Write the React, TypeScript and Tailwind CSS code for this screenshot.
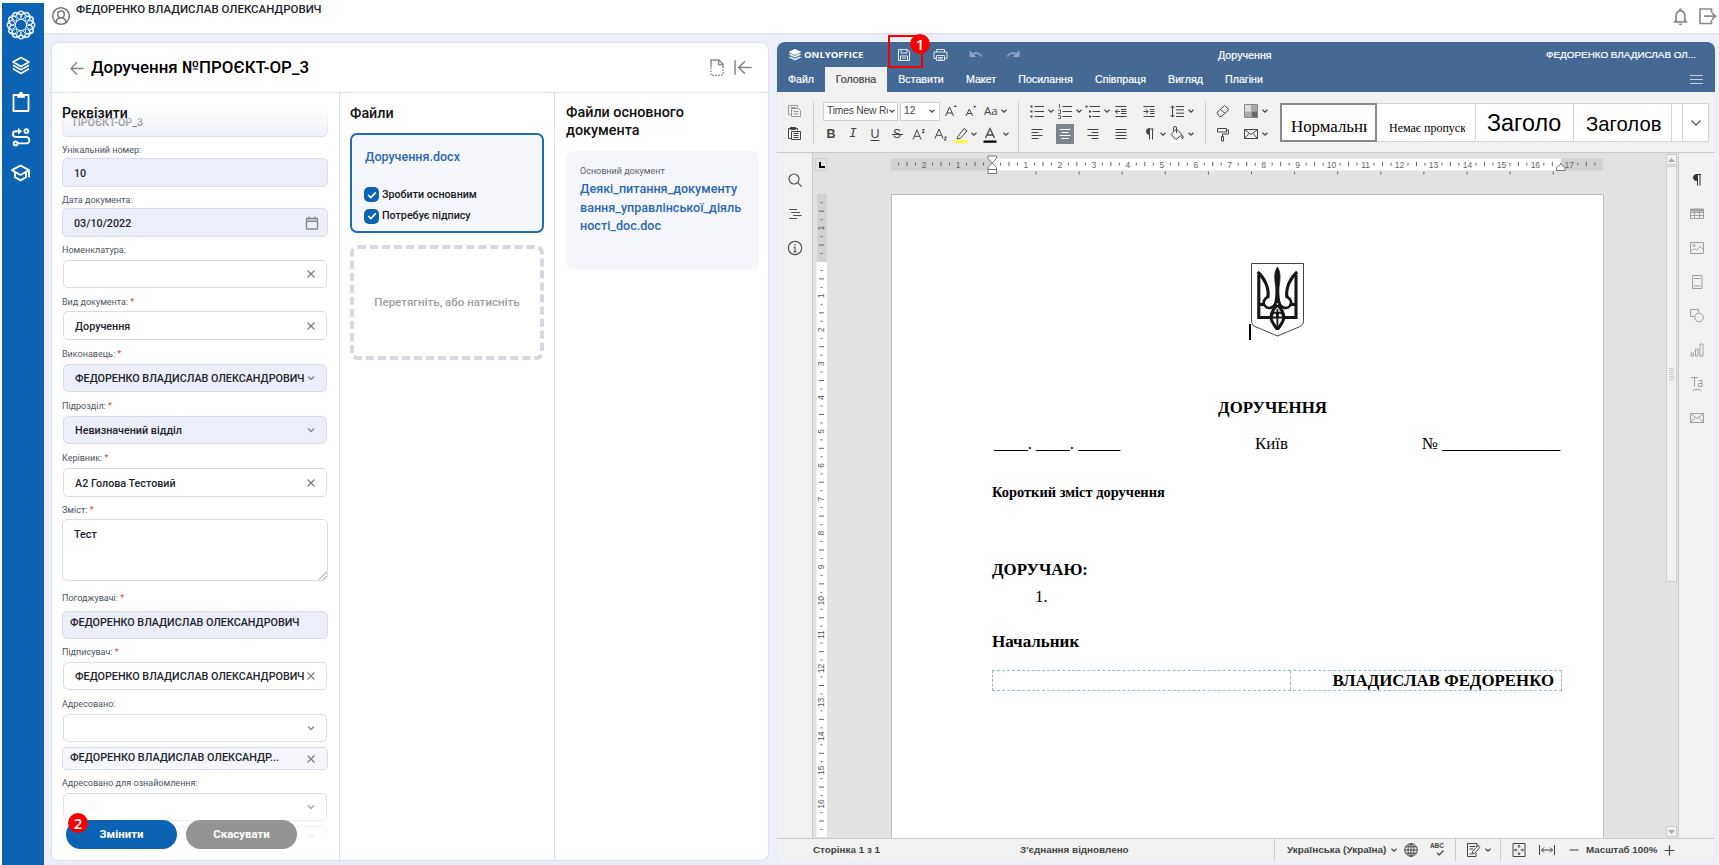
import React, { ReactNode } from "react";
import { MdNotificationsNone } from "react-icons/md";
import { CircleUserRound } from "lucide-react";

/* ---------- shared ---------- */

function Svg({ w, h, className = "", sw = 1, children }: { w: number; h: number; className?: string; sw?: number; children: ReactNode }) {
  return (
    <svg width={w} height={h} viewBox={`0 0 ${w} ${h}`} fill="none" stroke="currentColor" strokeWidth={sw} className={`shrink-0 ${className}`}>
      {children}
    </svg>
  );
}

const Chev = () => (
  <Svg w={8} h={8} sw={1.2} className="text-[#444]">
    <path d="M1.5 2.8 4 5.2 6.5 2.8" />
  </Svg>
);

function Badge({ n, className }: { n: number; className: string }) {
  return (
    <div className={`absolute flex size-[20px] items-center justify-center rounded-full bg-[#f80000] font-['Open_Sans'] text-[15px] font-semibold leading-none text-white ${className}`}>
      {n}
    </div>
  );
}

/* ---------- left navigation ---------- */

function Sidebar() {
  return (
    <nav className="ml-[2px] mt-[3px] flex w-[42px] shrink-0 flex-col items-center bg-[#0c62b3] pr-[4px] text-white">
      <Svg w={30} h={30} sw={0.9} className="mt-[7px]">
        {[0, 30, 60, 90, 120, 150, 180, 210, 240, 270, 300, 330].map((a) => (
          <g key={a} transform={`rotate(${a} 15 15)`}>
            <circle cx="15" cy="5.3" r="4.3" />
            <path d="M9.500 6 15 1l5.500 5" />
          </g>
        ))}
      </Svg>
      <Svg w={20} h={20} sw={1.6} className="mt-[16px]">
        <path d="M10 1.500 18 6l-8 4.500L2 6z M2 9.200l8 4.600 8-4.600 M2 12.800l8 4.700 8-4.700" strokeLinejoin="round" />
      </Svg>
      <Svg w={20} h={22} sw={1.8} className="mt-[15px]">
        <path d="M2.500 4h15v16h-15z" strokeLinejoin="round" />
        <path d="M6.200 3.200h7.600v3.600H6.200z" fill="currentColor" stroke="none" />
        <circle cx="10" cy="2.800" r="2" fill="currentColor" stroke="none" />
      </Svg>
      <Svg w={20} h={20} sw={1.9} className="mt-[14px]">
        <path d="M8 4.200H4.800a2.900 2.900 0 0 0 0 5.800h10.400a3.200 3.200 0 0 1 0 6.400H7" />
        <path d="M7 .8 11 4.200 7 7.600z" fill="currentColor" stroke="none" />
        <circle cx="15.400" cy="4" r="1.900" />
        <circle cx="4.600" cy="16.400" r="1.900" />
      </Svg>
      <Svg w={22} h={20} sw={1.9} className="mt-[16px]">
        <path d="M10.500 2.500 19 7.200l-8.500 4.800L2 7.200z M5 9.200v5l5.500 3.100 5.500-3.100v-5 M19 7.200v7" strokeLinejoin="round" />
      </Svg>
    </nav>
  );
}

/* ---------- form ---------- */

function Label({ text, req, className }: { text: string; req?: boolean; className: string }) {
  return (
    <div className={`shrink-0 text-[9px] leading-[12px] text-[#4c5560] ${className}`}>
      {text}
      {req && <span className="text-[#e0483e]"> *</span>}
    </div>
  );
}

const Cross = () => (
  <Svg w={10} h={10} sw={1.1} className="text-[#777]">
    <path d="m1.500 1.500 7 7m0-7-7 7" />
  </Svg>
);

function Field({ value, icon, disabled, className = "" }: { value?: string; icon?: "x" | "v" | "cal"; disabled?: boolean; className?: string }) {
  return (
    <div className={`flex shrink-0 items-center rounded-[5px] border border-[#d9dbe6] text-[10.76px] font-medium text-[#20242b] ${disabled ? "bg-[#eceef9]" : "bg-white"} ${className}`}>
      <span className="flex-1 whitespace-nowrap pt-[2px] leading-[16px]">{value}</span>
      {icon === "x" && <Cross />}
      {icon === "v" && (
        <Svg w={10} h={10} sw={1.3} className="text-[#888]">
          <path d="m2 3.500 3 3 3-3" />
        </Svg>
      )}
      {icon === "cal" && (
        <Svg w={14} h={14} sw={1.3} className="text-[#888]">
          <path d="M1.500 2.500h11v10.500h-11z M1.500 5.300h11 M4 .5v2 M10 .5v2" />
          <path d="M1.500 2.500h11v2.400h-11z" fill="currentColor" fillOpacity=".25" stroke="none" />
        </Svg>
      )}
    </div>
  );
}

function Requisites() {
  const sel = "mx-px pl-[11px] pr-[10px]";
  return (
    <section className="relative flex w-[288px] shrink-0 flex-col overflow-hidden border-r border-[#dfe1ec] pl-[10px] pr-[11px]">
      <Field value="ПРОЄКТ-ОР_3" disabled className="mt-[14px] h-[30px] pl-[10px]" />
      <Label text="Унікальний номер:" className="h-[21px] pt-[7px]" />
      <Field value="10" disabled className="h-[29px] pl-[11px]" />
      <Label text="Дата документа:" className="h-[21px] pt-[7px]" />
      <Field value="03/10/2022" disabled icon="cal" className="h-[29px] pl-[11px] pr-[8px]" />
      <Label text="Номенклатура:" className="h-[23px] pt-[7px]" />
      <Field icon="x" className={`h-[28px] ${sel}`} />
      <Label text="Вид документа:" req className="h-[23px] pt-[8px]" />
      <Field value="Доручення" icon="x" className={`h-[29px] ${sel}`} />
      <Label text="Виконавець:" req className="h-[24px] pt-[8px]" />
      <Field value="ФЕДОРЕНКО ВЛАДИСЛАВ ОЛЕКСАНДРОВИЧ" icon="v" disabled className={`h-[28px] ${sel}`} />
      <Label text="Підрозділ:" req className="h-[24px] pt-[8px]" />
      <Field value="Невизначений відділ" icon="v" disabled className={`h-[28px] ${sel}`} />
      <Label text="Керівник:" req className="h-[24px] pt-[8px]" />
      <Field value="А2 Голова Тестовий" icon="x" className={`h-[29px] ${sel}`} />
      <Label text="Зміст:" req className="h-[22px] pt-[7px]" />
      <div className="relative h-[62px] shrink-0 rounded-[5px] border border-[#d9dbe6] pl-[11px] pt-[8px] text-[10.76px] font-medium leading-[14px] text-[#20242b]">
        Тест
        <Svg w={9} h={9} className="absolute bottom-0 right-0 text-[#888]">
          <path d="M1 8.500 8.500 1 M5 8.500 8.500 5" />
        </Svg>
      </div>
      <Label text="Погоджувачі:" req className="h-[30px] pt-[11px]" />
      <Field value="ФЕДОРЕНКО ВЛАДИСЛАВ ОЛЕКСАНДРОВИЧ" disabled className="h-[28px] pb-[6px] pl-[7px]" />
      <Label text="Підписувач:" req className="h-[23px] pt-[7px]" />
      <Field value="ФЕДОРЕНКО ВЛАДИСЛАВ ОЛЕКСАНДРОВИЧ" icon="x" className={`h-[28px] ${sel}`} />
      <Label text="Адресовано:" className="h-[24px] pt-[8px]" />
      <Field icon="v" className={`h-[28px] ${sel}`} />
      <div className="mt-[5px] flex h-[23px] shrink-0 items-center justify-between rounded-[5px] border border-[#d9dbe6] bg-[#f6f7fd] pl-[7px] pr-[11px] text-[10.84px] font-medium text-[#20242b]">
        ФЕДОРЕНКО ВЛАДИСЛАВ ОЛЕКСАНДР...
        <Cross />
      </div>
      <Label text="Адресовано для ознайомлення:" className="h-[23px] pt-[7px]" />
      <Field icon="v" className={`h-[28px] ${sel}`} />
      <Field icon="v" className={`mt-[5px] h-[20px] ${sel}`} />

      <div className="absolute inset-x-0 top-0 h-[44px] bg-gradient-to-b from-white from-35% to-white/10" />
      <h2 className="absolute left-[10px] top-[11px] text-[14px] font-medium leading-[18px] text-[#111]">Реквізити</h2>
      <div className="absolute inset-x-0 bottom-0 h-[64px] bg-gradient-to-b from-white/0 to-white to-75%" />
      <div className="absolute bottom-[11px] left-[14px] flex gap-[9px] text-[11.4px] font-bold text-white">
        <button className="h-[29px] w-[111px] rounded-full bg-[#0c62b3]">Змінити</button>
        <button className="h-[29px] w-[111px] rounded-full bg-[#949494]">Скасувати</button>
      </div>
      <Badge n={2} className="bottom-[27px] left-[16px]" />
    </section>
  );
}

function Check({ text }: { text: string }) {
  return (
    <label className="flex h-[21.5px] items-center gap-[3px] text-[10.71px] font-medium text-[#15181d]">
      <span className="-ml-px flex size-[15px] items-center justify-center rounded-[5px] bg-[#0c62b3] text-white">
        <Svg w={10} h={8} sw={1.7}>
          <path d="m1.200 4 2.600 2.500L8.800 1.400" />
        </Svg>
      </span>
      {text}
    </label>
  );
}

function Workspace() {
  return (
    <main className="ml-[7px] mt-[8px] flex h-[819px] w-[718px] shrink-0 flex-col overflow-hidden rounded-[8px] border border-[#dfe1ec] bg-white">
      <div className="flex h-[50px] shrink-0 items-center border-b border-[#dfe1ec] pl-[18px] pr-[16px]">
        <Svg w={14} h={14} sw={1.4} className="text-[#868686]">
          <path d="M13.500 7.500H1 M7 1.200.9 7.500 7 13.600" />
        </Svg>
        <h1 className="ml-[7px] flex-1 whitespace-nowrap text-[16.860px] font-medium text-black">Доручення №ПРОЄКТ-ОР_3</h1>
        <Svg w={14} h={17} sw={1.4} className="text-[#8c8c8c]">
          <path d="M1 8V1h8l4 4v3 M8.500 1v4.500H13" />
          <path d="M1 8.500v7.700h12V8" strokeDasharray="1.6 1.4" />
        </Svg>
        <Svg w={18} h={17} sw={1.5} className="ml-[10px] text-[#868686]">
          <path d="M1 1.300v14.500 M17.600 8.500H4.500 M11 2.200 4.600 8.500l6.400 6.300" />
        </Svg>
      </div>
      <div className="flex min-h-0 flex-1">
        <Requisites />
        <section className="flex w-[215px] shrink-0 flex-col border-r border-[#dfe1ec] px-[10px] pt-[11px]">
          <h2 className="text-[14.3px] font-medium leading-[18px] text-[#111]">Файли</h2>
          <div className="mt-[11px] h-[100px] rounded-[7px] border-2 border-[#1f6cb9] bg-[#f6f7fd] pl-[13px] pt-[13px]">
            <a className="block text-[12.54px] font-medium leading-[18px] text-[#2a68b4]">Доручення.docx</a>
            <div className="mt-[18px]">
              <Check text="Зробити основним" />
              <Check text="Потребує підпису" />
            </div>
          </div>
          <div className="mt-[12px] flex h-[115px] items-center justify-center rounded-[8px] border-4 border-dashed border-[#d6d8e2] text-[11.5px] font-medium text-[#a0a0a0]">
            Перетягніть, або натисніть
          </div>
        </section>
        <section className="flex-1 px-[11px] pt-[11px]">
          <h2 className="text-[14.37px] font-medium leading-[18px] text-[#111]">
            Файли основного
            <br />
            документа
          </h2>
          <div className="mt-[11px] h-[119px] w-[193px] rounded-[7px] bg-[#f6f7fd] pl-[14px] pt-[14px]">
            <p className="text-[9px] leading-[12px] text-[#5a5f66]">Основний документ</p>
            <a className="mt-[3px] block whitespace-nowrap text-[12.58px] font-medium leading-[18.7px] text-[#2a68b4]">
              Деякі_питання_документу
              <br />
              вання_управлінської_діяль
              <br />
              ності_doc.doc
            </a>
          </div>
        </section>
      </div>
    </main>
  );
}

/* ---------- editor chrome ---------- */

const tabs: [string, string][] = [
  ["Файл", "w-[48px]"],
  ["Головна", "w-[62px]"],
  ["Вставити", "w-[68px]"],
  ["Макет", "w-[52px]"],
  ["Посилання", "w-[77px]"],
  ["Співпраця", "w-[73px]"],
  ["Вигляд", "w-[57px]"],
  ["Плагіни", "w-[60px]"],
];

function EditorHeader() {
  return (
    <header className="h-[50px] shrink-0 bg-[#446995] text-white [-webkit-text-stroke:0.2px_currentColor]">
      <div className="flex h-[25px] items-center pt-px">
        <Svg w={14} h={14} className="ml-[11px]" sw={0}>
          <path d="M7 1 13.500 4 7 7 .5 4z" fill="currentColor" />
          <path d="M.5 6.500 2.600 5.600 7 7.700l4.400-2.100 2.100.9L7 9.600z" fill="currentColor" fillOpacity=".9" />
          <path d="M.5 9.400 2.600 8.500 7 10.600l4.400-2.100 2.100.9L7 12.600z" fill="currentColor" fillOpacity=".8" />
        </Svg>
        <span className="ml-[2px] w-[63px] font-['Open_Sans'] text-[9.570px] font-bold [-webkit-text-stroke:0]">ONLYOFFICE</span>
        <Svg w={14} h={14} className="ml-[30px] text-[#dde5ee]">
          <path d="M1.500 1.500h9l2 2v9h-11z M4 1.500v3.500h6V1.500 M3.500 12.500V8h7v4.500 M5 10h4" />
        </Svg>
        <Svg w={15} h={14} className="ml-[22px] text-[#dde5ee]">
          <path d="M3.500 4V1.500h8V4 M3.500 10.500h-2.500V4h13v6.500h-2.500 M3.500 7.500h8v5h-8z M5 9.500h5 M5 11h5" />
        </Svg>
        <Svg w={14} h={10} className="ml-[21px] text-[#8fa5c0]">
          <path d="M1 1v5.500h5.500z" fill="currentColor" />
          <path d="M3 5C6 2 10 2 12.800 6.500" strokeWidth="1.6" />
        </Svg>
        <Svg w={14} h={10} className="ml-[23px] text-[#8fa5c0]">
          <path d="M13 1v5.500H7.500z" fill="currentColor" />
          <path d="M11 5C8 2 4 2 1.200 6.500" strokeWidth="1.6" />
        </Svg>
        <span className="ml-[198px] text-[10.7px]">Доручення</span>
        <span className="ml-auto mr-[19px] text-[9.9px]">ФЕДОРЕНКО ВЛАДИСЛАВ ОЛ...</span>
      </div>
      <div className="flex h-[25px] items-end text-[10.650px]">
        {tabs.map(([t, w], i) => (
          <div key={t} className={`flex h-[25px] items-center justify-center pt-px ${w} ${i === 1 ? "bg-[#f1f1f1] text-[#444]" : ""}`}>
            {t}
          </div>
        ))}
        <Svg w={13} h={10} className="mb-[7px] ml-auto mr-[12px] text-[#c6d2e0]">
          <path d="M0 .5h13 M0 4.500h13 M0 8.500h13" />
        </Svg>
      </div>
    </header>
  );
}

const Ic = ({ children, sw = 1, className = "" }: { children: ReactNode; sw?: number; className?: string }) => (
  <Svg w={18} h={18} sw={sw} className={className}>
    {children}
  </Svg>
);

const listLines = <path d="M6.500 4.500H16 M6.500 9.500H16 M6.500 14.500H16" />;
const mail = (
  <Ic>
    <path d="M2.500 4.500h13v9h-13z M2.500 4.500l6.500 5 6.500-5 M2.500 13.500l4.500-5 M15.500 13.500l-4.500-5" />
  </Ic>
);

function Toolbar() {
  return (
    <div className="flex h-[61px] shrink-0 border-b border-[#cbcbcb] bg-[#f1f1f1] pt-[9px] text-[#444]">
      <div className="ml-[9px] flex h-[43px] w-[28px] flex-col gap-[5px] border-r border-[#cbcbcb] pt-px">
        <Ic className="text-[#999]">
          <path d="M5.500 12.500h-3v-9h9v2 M5.500 6.500h7l2 2v6h-9z M7.500 9.500h5 M7.500 12h5 M4.500 5.500h5" />
        </Ic>
        <Ic>
          <path d="M5.500 13.500h-3v-10h9v2 M5.500 6.500h9v8h-9z M7.500 8.500h5 M7.500 10.500h5 M7.500 12.500h5" />
          <path d="M4.500 2.500h5v2h-5z" fill="currentColor" />
        </Ic>
      </div>
      <div className="flex w-[205px] flex-col gap-[3px] border-r border-[#cbcbcb]">
        <div className="flex h-[20px] items-center pl-[9px]">
          <div className="flex h-[19px] w-[75px] items-center border border-[#cfcfcf] bg-white pl-[3px] text-[10.3px]">
            <span className="w-[61px] overflow-hidden whitespace-nowrap tracking-[-0.2px]">Times New Ro</span>
            <Chev />
          </div>
          <div className="ml-[2px] flex h-[19px] w-[40px] items-center justify-between border border-[#cfcfcf] bg-white px-[3px] text-[10.3px]">
            12
            <Chev />
          </div>
          <Ic className="ml-[2px]">
            <path d="M3.500 14 7.500 5 11.500 14 M5 11h5" />
            <path d="M11.500 5 13.200 3l1.700 2z" fill="currentColor" stroke="none" />
          </Ic>
          <Ic className="ml-[2px]">
            <path d="M4 14 7.300 7 10.600 14 M5.200 11.500h4.200" />
            <path d="M11 4h3.400l-1.700 2z" fill="currentColor" stroke="none" />
          </Ic>
          <span className="ml-[2px] w-[18px] whitespace-nowrap pl-[2px] font-['Open_Sans'] text-[11.5px] leading-none">Aa</span>
          <Chev />
        </div>
        <div className="flex h-[20px] items-center pl-[6px]">
          <span className="w-[22px] text-center text-[12.5px] font-bold">B</span>
          <span className="w-[22px] text-center font-['Liberation_Mono'] text-[13px] italic">I</span>
          <span className="w-[22px] text-center text-[12.5px] underline underline-offset-2">U</span>
          <span className="relative flex w-[22px] items-center justify-center text-[12px]">
            S
            <span className="absolute left-[6px] top-1/2 h-px w-[11px] bg-[#444]" />
          </span>
          <Ic className="mx-[2px]">
            <path d="M3 14.500 7 5 11 14.500 M4.500 11.300h5 M12.300 4.500h2l-2 3h2.200" />
          </Ic>
          <Ic className="mx-[2px]">
            <path d="M3 13.500 7 4 11 13.500 M4.500 10.300h5 M12.300 12h2l-2 3h2.200" />
          </Ic>
          <Ic>
            <path d="M5.500 12 12 3.500l3 2.300-6.700 7.700-3.300.3z" />
            <path d="M2.500 15.500h13v2.300h-13z" fill="#ffff00" stroke="none" />
          </Ic>
          <Chev />
          <Ic className="ml-[3px]">
            <path d="M4.500 13 9 3.500l4.500 9.500 M6 10h6" strokeWidth="1.3" />
            <path d="M2.500 15.500h13v2.300h-13z" fill="#000" stroke="none" />
          </Ic>
          <span className="ml-[3px]">
            <Chev />
          </span>
        </div>
      </div>
      <div className="grid h-[43px] w-[187px] shrink-0 auto-rows-[20px] grid-cols-[18px_8px_18px_8px_18px_8px_18px_8px_18px_8px_18px_8px] items-center gap-x-px gap-y-[3px] border-r border-[#cbcbcb] pl-[9px]">
        <Ic>
          {listLines}
          <path d="M2.500 4.500h2 M2.500 9.500h2 M2.500 14.500h2" strokeWidth="2" />
        </Ic>
        <Chev />
        <Ic>
          {listLines}
          <path d="M3.500 2v4 M2 8h2.500v3 M2 11.500h3 M2 13.500h2.500v3H2" strokeWidth=".8" />
        </Ic>
        <Chev />
        <Ic>
          <path d="M5.500 4.500H16 M8.500 9.500H16 M8.500 14.500H16" />
          <path d="M1.500 4.500h2 M5 9.500h2 M5 14.500h2" strokeWidth="2" />
        </Ic>
        <Chev />
        <Ic>
          <path d="M3.500 4.500h11 M9 7.500h5.500 M9 9.500h5.500 M9 11.500h5.500 M3.500 14.500h11 M8 9.500H3.500 M5.500 7.200 3.300 9.500l2.200 2.300" />
        </Ic>
        <span />
        <Ic>
          <path d="M3.500 4.500h11 M10 7.500h4.500 M10 9.500h4.500 M10 11.500h4.500 M3.500 14.500h11 M3.500 9.500H8 M6 7.200l2.200 2.300L6 11.800" />
        </Ic>
        <span />
        <Ic>
          <path d="M8 4.500h8 M8 7.800h8 M8 11.200h8 M8 14.500h8 M4.500 4v11 M2.500 6l2-2.200L6.500 6 M2.500 13l2 2.200 2-2.200" />
        </Ic>
        <Chev />
        <Ic>
          <path d="M3.500 4.500h11 M3.500 7.500h7 M3.500 10.500h11 M3.500 13.500h7" />
        </Ic>
        <span />
        <span className="flex h-[20px] items-center bg-[#7d858c] text-white">
          <Ic>
            <path d="M3.500 4.500h11 M5.500 7.500h7 M3.500 10.500h11 M5.500 13.500h7" />
          </Ic>
        </span>
        <span />
        <Ic>
          <path d="M3.500 4.500h11 M7.500 7.500h7 M3.500 10.500h11 M7.500 13.500h7" />
        </Ic>
        <span />
        <Ic>
          <path d="M3.500 4.500h11 M3.500 7.500h11 M3.500 10.500h11 M3.500 13.500h11" />
        </Ic>
        <span />
        <Ic>
          <path d="M8.500 4h5 M9.500 4v10.500 M12.500 4v10.500" />
          <path d="M9.500 3.500a3 3 0 0 0 0 6z" fill="currentColor" />
        </Ic>
        <Chev />
        <Ic>
          <path d="M8.500 4 14 9.500 8 14.500 3 9.500z M8.500 8V3a1.500 1.500 0 0 0-3 0v3 M14.500 10.500q1.800 2.500 0 3.500-1.800-1 0-3.500" />
          <path d="M2.500 16h13v2h-13z" fill="#fff" stroke="none" />
        </Ic>
        <Chev />
      </div>
      <div className="grid h-[43px] shrink-0 auto-rows-[20px] grid-cols-[18px_8px_18px_8px] items-center gap-x-px gap-y-[3px] pl-[8px]">
        <Ic>
          <path d="m3 10.500 7.500-7 4.500 4-7.500 7H5.500z M6.500 7.500l4.500 4" />
        </Ic>
        <span />
        <Ic>
          <path d="M3 3h6.500v6.500H3z" fill="#ddd" stroke="none" />
          <path d="M9 3h6.500v6.500H9z" fill="#aaa" stroke="none" />
          <path d="M3 9.500h6.500V16H3z" fill="#aaa" stroke="none" />
          <path d="M9.500 9.500h6V16h-6z" fill="#666" stroke="none" />
          <path d="M2.500 2.500h13v13h-13z" stroke="#888" />
        </Ic>
        <Chev />
        <Ic>
          <path d="M3.500 3.500h9v3.500h-9z M12.500 5h2v4H8.500v2.500 M7.500 11.500h2v4.500h-2z" />
        </Ic>
        <span />
        {mail}
        <Chev />
      </div>
      <div className="ml-[11px] mt-[2px] flex h-[40px] text-black">
        <div className="flex h-[39px] w-[97px] items-end border-2 border-[#8a8a8a] bg-white pb-[2px] pl-[9px]">
          <span className="w-[76px] overflow-hidden whitespace-nowrap font-['Liberation_Serif'] text-[16.840px] leading-[22px]">Нормальни</span>
        </div>
        <div className="flex h-[39px] w-[99px] items-end border-y border-r border-[#d4d4d4] bg-white pb-[4px] pl-[12px]">
          <span className="w-[76px] overflow-hidden whitespace-nowrap font-['Liberation_Serif'] text-[12px] leading-[18px]">Немає пропуск</span>
        </div>
        <div className="flex h-[39px] w-[98px] items-end border-y border-r border-[#d4d4d4] bg-white pb-[5px] pl-[11px]">
          <span className="w-[75px] overflow-hidden whitespace-nowrap text-[23.3px] leading-[26px]">Заголо</span>
        </div>
        <div className="flex h-[39px] w-[98px] items-end border-y border-r border-[#d4d4d4] bg-white pb-[5px] pl-[12px]">
          <span className="w-[75px] overflow-hidden whitespace-nowrap text-[20.3px] leading-[24px]">Заголов</span>
        </div>
        <div className="h-[39px] w-[11px] border-y border-r border-[#d4d4d4] bg-white" />
        <div className="flex h-[39px] w-[26px] items-center justify-center border-y border-r border-[#d4d4d4] bg-white">
          <Svg w={12} h={8} sw={1.3} className="text-[#555]">
            <path d="m1.500 1.500 4.500 4.500 4.500-4.500" />
          </Svg>
        </div>
      </div>
    </div>
  );
}

/* ---------- rulers ---------- */

function HRuler() {
  const ticks: ReactNode[] = [];
  const zero = 101;
  for (let q = -11; q <= 71; q++) {
    const x = zero + q * 8.49;
    if (q === 0) continue;
    if (q % 4 === 0)
      ticks.push(
        <text key={q} x={x} y={9.5} textAnchor="middle" fontSize="8.5" fill="#666" stroke="none">
          {Math.abs(q / 4)}
        </text>,
      );
    else {
      const half = q % 2 === 0;
      ticks.push(<path key={q} d={`M${x} ${half ? 3.8 : 4.8}v${half ? 4.5 : 2.8}`} stroke="#666" />);
    }
  }
  return (
    <Svg w={713} h={20} className="mt-[5px] overflow-visible font-['Liberation_Sans']">
      <path d="M0 .5h712v12H0z" fill="#d2d2d2" stroke="none" />
      <path d="M101 .5h569v12H101z" fill="#fff" stroke="none" />
      {ticks}
      {Array.from({ length: 13 }, (_, i) => (
        <path key={i} d={`M${145 + i * 43.1} 13.500v3`} stroke="#666" />
      ))}
      <path d="M97 -2h8.500v2.500l-4.200 4.500L97 .5z M101.300 5l4.200 4.500v6H97v-6z M97 11.500h8.500" fill="#fff" stroke="#777" />
      <path d="M665.500 12.500v-3l4.300-3.500 4.300 3.500v3z" fill="#fff" stroke="#777" />
    </Svg>
  );
}

function VRuler() {
  const ticks: ReactNode[] = [];
  for (let q = -7; q <= 67; q++) {
    const y = 68 + q * 8.47;
    if (q === 0) continue;
    if (q % 4 === 0)
      ticks.push(
        <text key={q} transform={`translate(8.300 ${y}) rotate(-90)`} textAnchor="middle" fontSize="8.5" fill="#555" stroke="none">
          {Math.abs(q / 4)}
        </text>,
      );
    else {
      const half = q % 2 === 0;
      ticks.push(<path key={q} d={`M${half ? 3 : 4.5} ${y}h${half ? 5 : 2}`} stroke="#666" />);
    }
  }
  return (
    <Svg w={12} h={643} className="ml-[2.5px] mt-[23px] font-['Liberation_Sans']">
      <path d="M.5 0h10.500v643H.5z" fill="#fff" stroke="none" />
      <path d="M.5 0h10.500v68H.5z" fill="#d2d2d2" stroke="none" />
      {ticks}
    </Svg>
  );
}

/* ---------- document ---------- */

function Emblem() {
  const half = (
    <>
      <path d="M7.800 12V54.500h13" />
      <path d="M8 41.500h6" />
      <path d="M6.600 9C13.500 15 18.500 25 16.800 35" />
      <path d="M16.500 34c-3.500 2-5.200 6-2.500 9 3 3.500 8.500 2.300 10.300-2.500C25.500 36 26.300 30 26.300 22" strokeWidth="2.600" />
      <path d="M26.400 42c-3.500 3.500-6.700 8-6.400 12.500.3 5 3.600 7.500 6.400 12" />
      <path d="M20.300 55c.8-6 6.100-8 6.100-1" strokeWidth="2" />
    </>
  );
  return (
    <Svg w={53} h={74} sw={3.1} className="text-[#161616]">
      <path d="M.5.5h52v58q0 3.500-3.500 5L26.500 73 4 63.500Q.5 62 .5 58.500z" strokeWidth="1" stroke="#444" />
      {half}
      <g transform="matrix(-1 0 0 1 52.800 0)">{half}</g>
      <path d="M26.400 4c-3 5-3.300 10-1.600 20l.6 16h2l.6-16c1.700-10 1.400-15-1.600-20z" fill="currentColor" strokeWidth=".8" />
      <path d="M26.400 46v21 M20.500 54.500h12" strokeWidth="1.800" />
    </Svg>
  );
}

function Page() {
  return (
    <article className="mt-[16px] flex w-[713px] flex-1 flex-col overflow-hidden border-x border-t border-[#bbbec2] bg-white pl-[100px] pt-[68px] font-['Liberation_Serif'] text-[16.840px] text-black">
      <div className="relative ml-[259px] h-[74px] w-[53px] shrink-0">
        <Emblem />
        <span className="absolute -left-[2px] top-[61px] h-[16px] w-[2px] bg-black" />
      </div>
      <p className="mt-[61px] h-[20px] w-[570px] shrink-0 pr-[9px] text-center font-bold leading-[20px]">ДОРУЧЕННЯ</p>
      <div className="mt-[16px] flex h-[20px] w-[570px] shrink-0 leading-[20px]">
        <span className="w-[263px] pl-[2px]">____. ____. _____</span>
        <span className="w-[167px]">Київ</span>
        <span className="whitespace-nowrap">№ ______________</span>
      </div>
      <p className="mt-[28px] h-[20px] shrink-0 text-[14.450px] font-bold leading-[20px]">Короткий зміст доручення</p>
      <p className="mt-[58px] h-[20px] shrink-0 font-bold leading-[20px]">ДОРУЧАЮ:</p>
      <p className="mt-[7px] h-[20px] shrink-0 pl-[43px] leading-[20px]">1.</p>
      <p className="mt-[25px] h-[20px] shrink-0 text-[17px] font-bold leading-[20px]">Начальник</p>
      <div className="mt-[18px] flex h-[21px] w-[570px] shrink-0 border border-dashed border-[#9db4cb]">
        <span className="w-[298px] border-r border-dashed border-[#9db4cb]" />
        <b className="flex-1 whitespace-nowrap pr-[7px] text-right leading-[19px]">ВЛАДИСЛАВ ФЕДОРЕНКО</b>
      </div>
    </article>
  );
}

function ScrollBtn({ up }: { up?: boolean }) {
  return (
    <span className="flex h-[11px] w-[11px] items-center justify-center border border-[#cfcfcf] bg-[#f1f1f1]">
      <Svg w={7} h={4} sw={0}>
        <path d={up ? "M0 4 3.500 0 7 4z" : "M0 0 3.500 4 7 0z"} fill="#adadad" />
      </Svg>
    </span>
  );
}

function EditorBody() {
  return (
    <div className="flex min-h-0 flex-1">
      <div className="flex w-[36px] shrink-0 flex-col items-center gap-[16px] border-r border-[#cbcbcb] bg-[#f1f1f1] pt-[18px] text-[#555]">
        <Ic sw={1.2}>
          <circle cx="8" cy="8" r="5" />
          <path d="m11.700 11.700 4 4" />
        </Ic>
        <Ic sw={1.2}>
          <path d="M3 4.500h8 M5 7.500h9 M7 10.500h8.500 M3 13.500h8" />
        </Ic>
        <Ic sw={1.2}>
          <circle cx="9" cy="9" r="6.700" />
          <path d="M9 8v5 M9 5v1.600 M7.700 8.300H9 M7.500 12.800h3" />
        </Ic>
      </div>
      <div className="flex min-w-0 flex-1 bg-[#e2e2e2]">
        <div className="w-[14px] shrink-0">
          <div className="ml-[2px] mt-[5px] h-[13px] w-[12px] border border-[#d0d0d0]">
            <div className="ml-[3px] mt-[3px] h-[6px] w-[6px] border-b-2 border-l-2 border-black" />
          </div>
          <VRuler />
        </div>
        <div className="ml-[64px] flex flex-col">
          <HRuler />
          <Page />
        </div>
        <div className="ml-auto mr-px flex w-[11px] flex-col justify-between py-px">
          <div className="flex flex-col items-center">
            <ScrollBtn up />
            <div className="mt-px flex h-[416px] w-[11px] items-center justify-center border border-[#cfcfcf] bg-[#f1f1f1]">
              <Svg w={5} h={13}>
                <path d="M0 .5h5 M0 2.500h5 M0 4.500h5 M0 6.500h5 M0 8.500h5 M0 10.500h5 M0 12.500h5" stroke="#ccc" />
              </Svg>
            </div>
          </div>
          <ScrollBtn />
        </div>
      </div>
      <div className="flex w-[37px] shrink-0 flex-col items-center gap-[16px] border-l border-[#cbcbcb] bg-[#f1f1f1] pt-[18px] text-[#a0a0a0]">
        <Ic className="text-[#333]">
          <path d="M8.500 3.500h4.500 M9.500 4v10.500 M12 4v10.500" />
          <path d="M8.500 3.500a3 3 0 0 0 0 6z" fill="currentColor" />
        </Ic>
        <Ic>
          <path d="M2.500 4.500h13v9h-13z M2.500 7.500h13 M2.500 10.500h13 M6.500 4.500v9 M11.500 4.500v9" />
          <path d="M2.500 4h13v2h-13z" fill="currentColor" />
        </Ic>
        <Ic>
          <path d="M2.500 3.500h13v11h-13z M3 12l3.500-2.500 2 1.500 3.500-3.500 3.500 3" />
          <circle cx="6" cy="6.500" r="1" />
        </Ic>
        <Ic>
          <path d="M4.500 2.500h9.500v13H4.500z M6 5.500h6.500 M6 13h6.500" />
        </Ic>
        <Ic>
          <path d="M6.500 9.500h-4v-7h8v3" />
          <circle cx="11" cy="10.500" r="4.300" />
        </Ic>
        <Ic>
          <path d="M3 12h2.500v3H3z M7.500 8H10v7H7.500z M12 3h3v12h-3z" />
        </Ic>
        <Ic>
          <path d="M3 2.500h7 M6.500 2.500v9 M10.500 5.500h3.500v6 M14 8.500h-3.500v3H14 M4.500 16q4.500-3.500 9 0" />
        </Ic>
        {mail}
      </div>
    </div>
  );
}

function StatusBar() {
  return (
    <footer className="flex h-[23px] shrink-0 items-center border-t border-[#cbcbcb] bg-[#f1f1f1] text-[9.870px] font-bold text-[#444]">
      <span className="w-[243px] whitespace-nowrap pl-[36px]">Сторінка 1 з 1</span>
      <span className="whitespace-nowrap">З'єднання відновлено</span>
      <div className="ml-auto flex h-full w-[182px] shrink-0 items-center border-x border-[#cbcbcb] pl-[12px]">
        <span className="w-[103px] whitespace-nowrap text-[9.950px]">Українська (Україна)</span>
        <Chev />
        <Ic className="ml-[4px]">
          <circle cx="9" cy="9" r="6.300" />
          <ellipse cx="9" cy="9" rx="3" ry="6.300" />
          <path d="M9 2.700v12.600 M2.700 9h12.600 M3.500 5.800h11 M3.500 12.200h11" />
        </Ic>
        <span className="ml-[10px] flex h-[18px] w-[18px] flex-col pt-px text-[6.5px] leading-[8px] tracking-[-0.1px]">
          ABC
          <Svg w={8} h={6} sw={1.2} className="ml-[6px]">
            <path d="m1 2.500 2 2.500L7.500.5" />
          </Svg>
        </span>
      </div>
      <div className="flex h-full w-[45px] shrink-0 items-center border-r border-[#cbcbcb] pl-[8px]">
        <Ic>
          <path d="M13 6V2.500H3.500v13H12V12 M5.500 5.500h5.500 M5.500 8h3.500 M5.500 13h2" />
          <path d="m8.500 10.500 5.500-6 2 1.800-5.500 6-2.500.6z" />
        </Ic>
        <span className="ml-[2px]">
          <Chev />
        </span>
      </div>
      <div className="flex w-[214px] shrink-0 items-center">
        <Ic className="ml-[9px]">
          <path d="M3 2.500h12v13H3z M9 4v3 M9 11v3 M4.500 9h3 M10.500 9h3 M7.700 5.500 9 4.200l1.300 1.300 M7.700 12.500 9 13.800l1.300-1.300 M5.800 7.700 4.500 9l1.300 1.300 M12.200 7.700 13.500 9l-1.300 1.300" />
        </Ic>
        <Ic className="ml-[10px]">
          <path d="M1.500 4v10 M16.500 4v10 M3.500 9h11 M6 6.500 3.500 9 6 11.500 M12 6.500 14.500 9 12 11.500" />
        </Ic>
        <Svg w={10} h={10} sw={1.2} className="ml-[13px]">
          <path d="M.5 5h9" />
        </Svg>
        <span className="ml-[7px] w-[74px] whitespace-nowrap text-[9.810px]">Масштаб 100%</span>
        <Svg w={11} h={11} sw={1.2} className="ml-[4px]">
          <path d="M.5 5.500h10 M5.500.5v10" />
        </Svg>
      </div>
    </footer>
  );
}

export default function App() {
  return (
    <div className="flex h-[865px] w-[1719px] overflow-hidden bg-white font-['Roboto',sans-serif]">
      <Sidebar />
      <div className="flex min-w-0 flex-1 flex-col">
        <header className="flex h-[34px] shrink-0 border-b border-[#dfe1ec] bg-white">
          <CircleUserRound size={20} strokeWidth={1.8} className="ml-[7px] mt-[6px] text-[#757575]" />
          <span className="ml-[5px] mt-[1px] text-[11.5px] font-medium leading-[16px] text-[#20242b]">ФЕДОРЕНКО ВЛАДИСЛАВ ОЛЕКСАНДРОВИЧ</span>
          <MdNotificationsNone size={21} className="ml-auto mt-[6px] text-[#8c8c8c]" />
          <Svg w={18} h={17} sw={1.7} className="ml-[8px] mr-[2px] mt-[8px] text-[#8c8c8c]">
            <path d="M12.500 4.500V1H1v14.500h11.500V12 M5 8.200h11.500 M13 4.800l3.500 3.400-3.500 3.500" />
          </Svg>
        </header>
        <div className="flex min-h-0 flex-1 border-r-2 border-[#f2f2f6] bg-[#eceff9]">
          <Workspace />
          <div className="relative ml-[8px] mt-[8px] h-[819px] w-[938px] shrink-0 font-['Liberation_Sans',sans-serif]">
            <div className="flex h-full flex-col overflow-hidden rounded-[8px]">
              <EditorHeader />
              <Toolbar />
              <EditorBody />
              <StatusBar />
            </div>
            <div className="absolute -top-[7px] left-[111px] h-[33px] w-[35px] border-2 border-[#f80000]" />
            <Badge n={1} className="-top-[8px] left-[133px]" />
          </div>
        </div>
      </div>
    </div>
  );
}
